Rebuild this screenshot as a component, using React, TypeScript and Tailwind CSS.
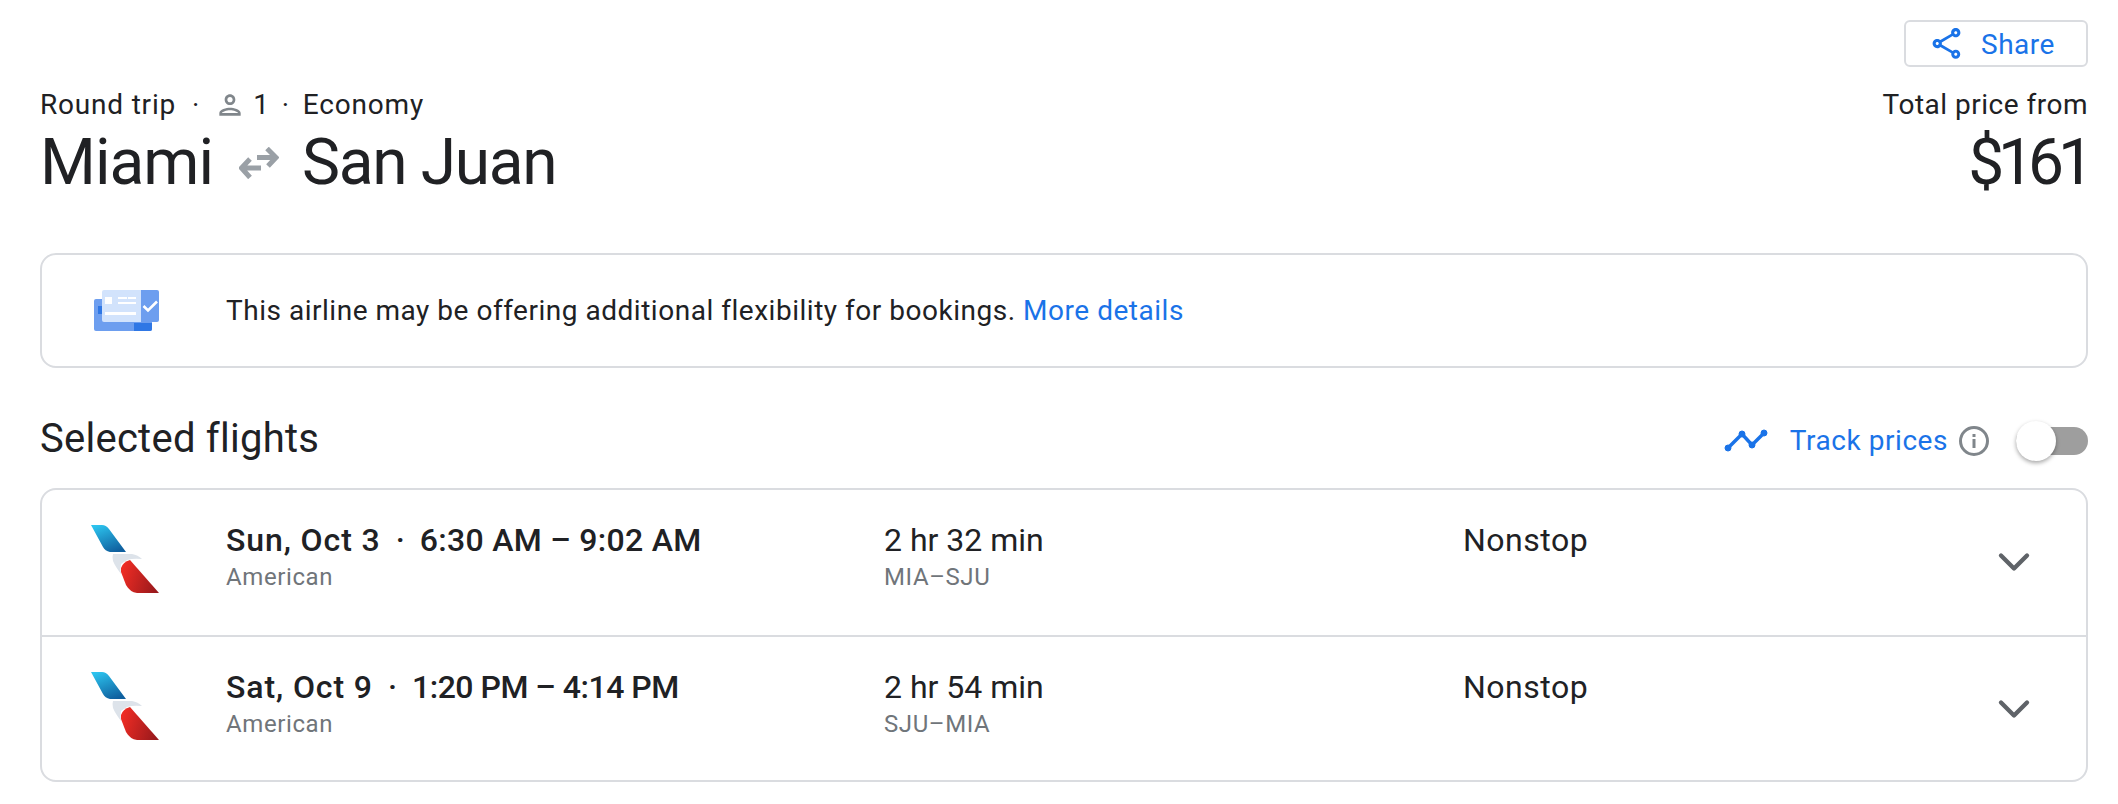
import { ChevronDown } from 'lucide-react';

const heading = "font-['Roboto',sans-serif]";

const flights = [
	{ date: 'Sun, Oct 3', times: '6:30 AM – 9:02 AM', timesClass: 'tracking-[0.3px]', duration: '2 hr 32 min', route: 'MIA–SJU' },
	{ date: 'Sat, Oct 9', times: '1:20 PM – 4:14 PM', timesClass: 'tracking-[-0.5px]', duration: '2 hr 54 min', route: 'SJU–MIA' },
];

function ShareIcon() {
	return (
		<svg viewBox="0 0 24 24" className="h-[37px] w-[37px] fill-[#1a73e8]">
			<path d="M18 16.08c-.76 0-1.44.3-1.96.77L8.91 12.7c.05-.23.09-.46.09-.7s-.04-.47-.09-.7l7.05-4.11c.54.5 1.25.81 2.04.81 1.66 0 3-1.34 3-3s-1.34-3-3-3-3 1.34-3 3c0 .24.04.47.09.7L8.04 9.81C7.5 9.31 6.79 9 6 9c-1.66 0-3 1.34-3 3s1.34 3 3 3c.79 0 1.5-.31 2.04-.81l7.12 4.16c-.05.21-.08.43-.08.65 0 1.61 1.31 2.92 2.92 2.92s2.92-1.31 2.92-2.92-1.31-2.92-2.92-2.92zM18 4c.55 0 1 .45 1 1s-.45 1-1 1-1-.45-1-1 .45-1 1-1zM6 13c-.55 0-1-.45-1-1s.45-1 1-1 1 .45 1 1-.45 1-1 1zm12 7.02c-.55 0-1-.45-1-1s.45-1 1-1 1 .45 1 1-.45 1-1 1z" />
		</svg>
	);
}

function PersonIcon() {
	return (
		<svg viewBox="0 0 24 24" className="h-8 w-8 fill-[#80868b]">
			<path d="M12 6c1.1 0 2 .9 2 2s-.9 2-2 2-2-.9-2-2 .9-2 2-2m0 10c2.7 0 5.8 1.29 6 2H6c.23-.72 3.31-2 6-2m0-12C9.79 4 8 5.79 8 8s1.79 4 4 4 4-1.79 4-4-1.79-4-4-4zm0 10c-2.67 0-8 1.34-8 4v2h16v-2c0-2.66-5.33-4-8-4z" />
		</svg>
	);
}

function SwapIcon() {
	return (
		<svg viewBox="0 0 40 32" fill="none" className="h-8 w-10 stroke-[#9aa0a6]" strokeWidth="5">
			<path d="M18 10.5H36M28 1.5L37 10.5L29 19" />
			<path d="M22 21H3M11 12L2.5 21L11 30.5" />
		</svg>
	);
}

function TicketIcon() {
	return (
		<svg viewBox="0 0 66 42" className="h-[42px] w-[66px]">
			<rect x="0" y="9" width="58" height="32" rx="2" fill="#6d9eef" />
			<path d="M40 33H58V39a2 2 0 0 1-2 2H40z" fill="#2f77e5" />
			<rect x="4" y="16" width="4" height="8" fill="#2f77e5" />
			<path d="M47 0H63a2 2 0 0 1 2 2V30a2 2 0 0 1-2 2H47z" fill="#6d9eef" />
			<path d="M10 0H47V32H10a2 2 0 0 1-2-2V2a2 2 0 0 1 2-2z" fill="#d2e3fc" />
			<g fill="#fff">
				<rect x="11" y="7" width="7" height="7" />
				<rect x="24" y="7" width="9" height="2" />
				<rect x="34" y="7" width="8" height="2" />
				<rect x="24" y="12" width="18" height="2" />
				<rect x="11" y="22" width="31" height="3" />
			</g>
			<path d="M49.5 16L54 20.5L63 11.5" fill="none" stroke="#fff" strokeWidth="2.6" />
		</svg>
	);
}

function TrendIcon() {
	return (
		<svg viewBox="0 0 44 24" className="h-6 w-11 fill-[#1a73e8] stroke-[#1a73e8]">
			<polyline points="4,19 18,5 28,16 40,4" fill="none" strokeWidth="3.5" />
			<circle cx="4" cy="19" r="3" />
			<circle cx="18" cy="5" r="3" />
			<circle cx="28" cy="16" r="3" />
			<circle cx="40" cy="4" r="3" />
		</svg>
	);
}

function InfoIcon() {
	return (
		<svg viewBox="0 0 30 30" className="h-[30px] w-[30px]">
			<circle cx="15" cy="15" r="13.5" fill="none" stroke="#80868b" strokeWidth="3" />
			<rect x="13.5" y="13" width="3" height="9" fill="#80868b" />
			<rect x="13.5" y="8" width="3" height="3" fill="#80868b" />
		</svg>
	);
}

function AirlineLogo() {
	return (
		<svg viewBox="0 0 68 68" className="h-[68px] w-[68px]">
			<defs>
				<linearGradient id="aa-blue" x1="0.2" y1="0" x2="0.7" y2="1">
					<stop offset="0" stopColor="#2cc3ee" />
					<stop offset="1" stopColor="#0f5f9e" />
				</linearGradient>
				<linearGradient id="aa-red" x1="0" y1="0.4" x2="1" y2="0.7">
					<stop offset="0" stopColor="#ee2c24" />
					<stop offset="1" stopColor="#99191c" />
				</linearGradient>
			</defs>
			<path d="M0 0H11Q15 0 18 4L35 27H19Q14 26 12 22Z" fill="url(#aa-blue)" />
			<path d="M22 29H41Q47 30 51 34Q42 33 36 35L30 39Q29 44 30 49Q24 41 22 36Q21 32 22 29Z" fill="#dde3ea" />
			<path d="M30 43Q32 37 39 35L68 68H46Q39 67 35 60L30 47Z" fill="url(#aa-red)" />
		</svg>
	);
}

export default function App() {
	return (
		<div className={`h-[804px] w-[2118px] overflow-hidden bg-white pt-5 pr-[30px] pl-10 text-[#202124] ${heading}`}>
			<div className="flex justify-end">
				<button className="flex h-[47px] w-[184px] items-center gap-4 rounded-md border-2 border-[#dadce0] pl-[22px] text-[28px] text-[#1a73e8]">
					<ShareIcon />
					<span className="mt-[2px] tracking-[0.5px]">Share</span>
				</button>
			</div>

			<div className="mt-[18px] flex items-start justify-between">
				<div>
					<div className="flex h-10 items-center text-[28px] tracking-[0.8px]">
						<span>Round trip</span>
						<span className="ml-4">·</span>
						<span className="ml-[14px]"><PersonIcon /></span>
						<span className="ml-[7px]">1</span>
						<span className="ml-3">·</span>
						<span className="ml-[13px]">Economy</span>
					</div>
					<div className="flex h-[75px] items-center text-[64px] leading-[72px] tracking-[-1px]">
						<span>Miami</span>
						<span className="mr-[23px] ml-[26px]"><SwapIcon /></span>
						<span className="tracking-[-1.3px]">San Juan</span>
					</div>
				</div>
				<div className="text-right">
					<div className="flex h-10 items-center justify-end text-[28px] tracking-[0.5px]">Total price from</div>
					<div className="flex h-[75px] items-center justify-end text-[64px] leading-[72px] tracking-[-6px]">$161</div>
				</div>
			</div>

			<div className="mt-[53px] flex h-[115px] items-center rounded-2xl border-2 border-[#dadce0] pl-[52px]">
				<TicketIcon />
				<p className="ml-[66px] text-[28px] tracking-[0.52px]">
					This airline may be offering additional flexibility for bookings. <span className="text-[#1a73e8]">More details</span>
				</p>
			</div>

			<div className="mt-10 flex h-[60px] items-center justify-between">
				<h2 className="pt-[2px] text-[40px] tracking-[0.25px]">Selected flights</h2>
				<div className="flex items-center pt-[5px]">
					<TrendIcon />
					<span className="ml-[22px] text-[28px] tracking-[0.55px] text-[#1a73e8]">Track prices</span>
					<span className="ml-[11px]"><InfoIcon /></span>
					<div className="relative ml-[27px] h-7 w-[72px] rounded-full bg-[#9e9e9e]">
						<div className="absolute top-[-6px] left-0 h-10 w-10 rounded-full bg-white shadow-[0_2px_4px_rgba(0,0,0,0.35)]" />
					</div>
				</div>
			</div>

			<div className="mt-5 rounded-2xl border-2 border-[#dadce0]">
				{flights.map((f, i) => (
					<div key={f.date} className={`flex h-[145px] items-start pt-[31px] ${i > 0 ? 'border-t-2 border-[#dadce0]' : ''}`}>
						<div className="mt-1 ml-[49px] w-[135px]">
							<AirlineLogo />
						</div>
						<div className="w-[658px]">
							<div className="flex text-[32px] leading-[38px] font-medium">
								<span className="tracking-[0.9px]">{f.date}</span>
								<span className="mx-[15px]">·</span>
								<span className={f.timesClass}>{f.times}</span>
							</div>
							<div className="text-2xl leading-[36px] tracking-[0.6px] text-[#70757a]">American</div>
						</div>
						<div className="w-[579px]">
							<div className="text-[32px] leading-[38px]">{f.duration}</div>
							<div className="text-2xl leading-[36px] tracking-[0.6px] text-[#70757a]">{f.route}</div>
						</div>
						<div className="flex-1 text-[32px] leading-[38px] tracking-[0.5px]">Nonstop</div>
						<ChevronDown className="mt-[15px] mr-[46px] h-[52px] w-[52px] text-[#5f6368]" strokeWidth={2} />
					</div>
				))}
			</div>
		</div>
	);
}
